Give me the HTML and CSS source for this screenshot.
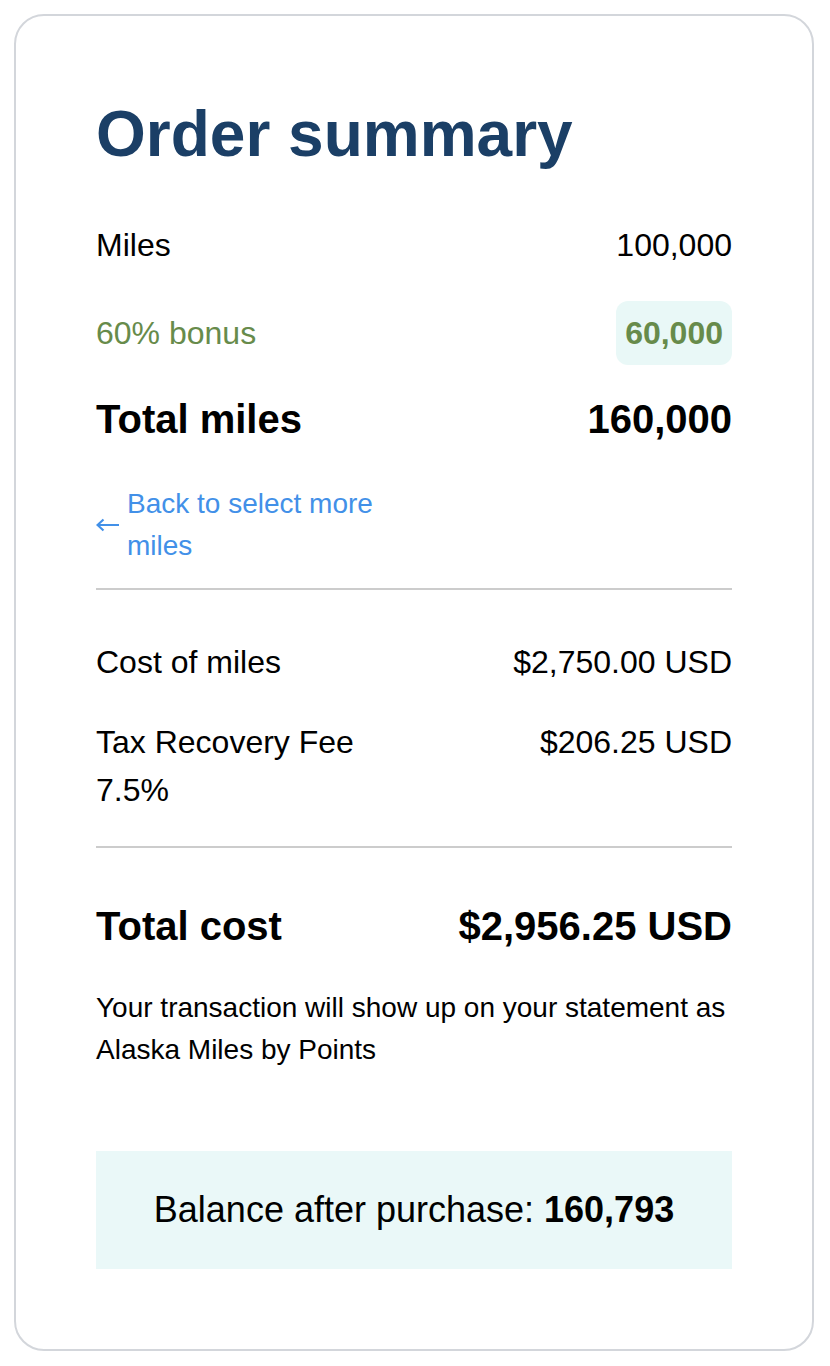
FILE: index.html
```html
<!DOCTYPE html>
<html lang="en">
<head>
<meta charset="utf-8">
<title>Order summary</title>
<link rel="stylesheet" href="styles.css">
</head>
<body>
<div class="card">
  <h1 class="title">Order summary</h1>

  <div class="rows">
    <div class="row">
      <span class="label">Miles</span>
      <span class="value">100,000</span>
    </div>
    <div class="row row-bonus">
      <span class="label">60% bonus</span>
      <span class="value badge">60,000</span>
    </div>
    <div class="row row-total">
      <span class="label">Total miles</span>
      <span class="value">160,000</span>
    </div>
  </div>

  <a class="back" href="#">
    <svg class="back-icon" width="24" height="24" viewBox="0 0 24 24" aria-hidden="true">
      <path d="M1.5 12H23M7.5 6.5L1.5 12L7.5 17.5" fill="none" stroke="currentColor" stroke-width="2.2" stroke-linecap="butt" stroke-linejoin="miter"/>
    </svg>
    <span class="back-text">Back to select more miles</span>
  </a>

  <div class="costs">
    <div class="row">
      <span class="label">Cost of miles</span>
      <span class="value">$2,750.00 USD</span>
    </div>
    <div class="row">
      <span class="label label-narrow">Tax Recovery Fee 7.5%</span>
      <span class="value">$206.25 USD</span>
    </div>
  </div>

  <div class="row row-grand">
    <span class="label">Total cost</span>
    <span class="value">$2,956.25 USD</span>
  </div>

  <p class="note">Your transaction will show up on your statement as Alaska Miles by Points</p>

  <div class="balance">Balance after purchase: <strong>160,793</strong></div>
</div>
</body>
</html>
```

FILE: styles.css
```css
html, body {
  margin: 0;
  padding: 0;
  background: #ffffff;
}

body {
  font-family: "Liberation Sans", Arial, Helvetica, sans-serif;
  color: #000000;
  padding: 14px;
}

.card {
  box-sizing: border-box;
  width: 800px;
  border: 2px solid #d3d6db;
  border-radius: 30px;
  padding: 80px;
  background: #ffffff;
}

.title {
  margin: 0 0 48px 0;
  font-size: 64px;
  line-height: 77px;
  font-weight: 700;
  color: #1b3f66;
}

.rows {
  display: flex;
  flex-direction: column;
  gap: 32px;
}

.row {
  display: flex;
  justify-content: space-between;
  align-items: flex-start;
  font-size: 32px;
  line-height: 48px;
}

.value {
  text-align: right;
}

.row-bonus {
  align-items: center;
  color: #678b4b;
}

.badge {
  font-weight: 700;
  background: #e9f8f7;
  border-radius: 12px;
  padding: 8px 9px;
}

.row-total {
  font-size: 40px;
  line-height: 44px;
  font-weight: 700;
}

.back {
  display: flex;
  align-items: center;
  gap: 7px;
  margin-top: 42px;
  color: #4290e8;
  text-decoration: none;
  font-size: 28px;
  line-height: 42px;
  padding-bottom: 21px;
  border-bottom: 2px solid #cccccc;
}

.back-icon {
  flex: none;
  display: block;
}

.back-text {
  max-width: 286px;
}

.costs {
  display: flex;
  flex-direction: column;
  gap: 32px;
  padding: 48px 0 32px 0;
  border-bottom: 2px solid #cccccc;
}

.label-narrow {
  max-width: 50%;
}

.row-grand {
  margin-top: 48px;
  font-size: 40px;
  line-height: 60px;
  font-weight: 700;
}

.note {
  margin: 31px 0 0 0;
  font-size: 28px;
  line-height: 42px;
}

.balance {
  margin-top: 80px;
  padding: 32px;
  background: #eaf8f8;
  text-align: center;
  font-size: 36px;
  line-height: 54px;
}

.balance strong {
  font-weight: 700;
}
```
